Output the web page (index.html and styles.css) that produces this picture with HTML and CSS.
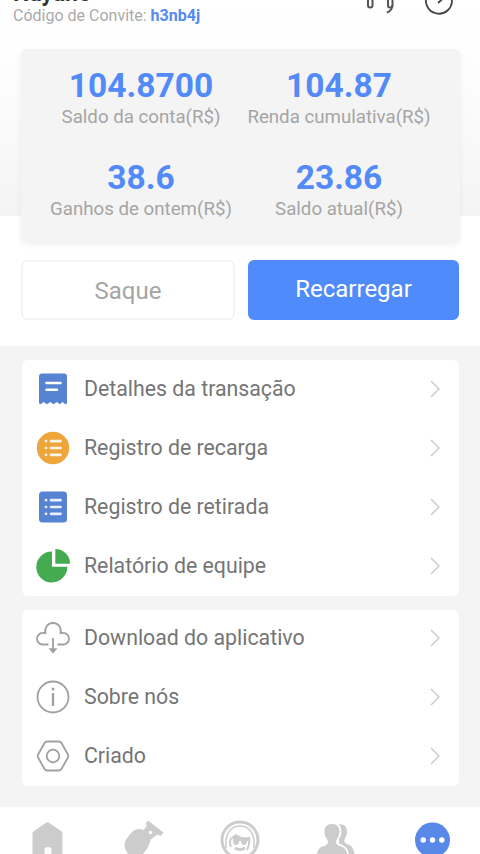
FILE: index.html
```html
<!DOCTYPE html>
<html lang="pt-BR">
<head>
<meta charset="utf-8">
<meta name="viewport" content="width=device-width">
<title>Minha conta</title>
<link rel="stylesheet" href="styles.css">
</head>
<body>
<div class="app">
  <section class="top">
    <header class="header">
      <div class="user">
        <div class="name">Nayane</div>
        <div class="invite">Código de Convite: <b>h3nb4j</b></div>
      </div>
      <div class="actions">
        <svg class="headset" viewBox="0 0 32 36" fill="none" stroke="#555" stroke-width="2"><path d="M4 20V14a12 12 0 0 1 24 0v6"/><rect x="4" y="18" width="4.500" height="10.500" rx="2"/><rect x="24" y="18" width="4.500" height="10.500" rx="2"/><path d="M28.300 26q0 6-5.500 7.500"/></svg>
        <svg class="clock" viewBox="0 0 32 36" fill="none" stroke="#444" stroke-width="1.800"><path d="M28.800 20A13 13 0 1 1 26 13.500"/><path d="M15 24l5-4.500"/></svg>
      </div>
    </header>
    <div class="stats">
      <div class="stat"><strong>104.8700</strong><span>Saldo da conta(R$)</span></div>
      <div class="stat"><strong>104.87</strong><span>Renda cumulativa(R$)</span></div>
      <div class="stat"><strong>38.6</strong><span>Ganhos de ontem(R$)</span></div>
      <div class="stat"><strong>23.86</strong><span>Saldo atual(R$)</span></div>
    </div>
  </section>
  <div class="buttons">
    <button class="btn">Saque</button>
    <button class="btn primary">Recarregar</button>
  </div>
  <main class="menus">
    <nav class="menu">
      <a class="row"><svg class="icon" viewBox="0 0 34 34"><path fill="#5683d2" d="M6 1.500h22a3 3 0 0 1 3 3V31q-.5 1.500-2 1l-2.500-2-2.500 2.200-3.200-2.200-3.300 2.200-3.300-2.200-3.200 2.200L7.500 30 5 32q-1.500.5-2-1V4.500a3 3 0 0 1 3-3z"/><path d="M10.500 11h14M10.500 17.800h10.500" stroke="#fff" stroke-width="2.500" stroke-linecap="round"/></svg><span>Detalhes da transação</span><svg class="chev" viewBox="0 0 10 18"><path d="M1 1l8 8-8 8"/></svg></a>
      <a class="row"><svg class="icon" viewBox="0 0 34 34"><circle cx="17" cy="17" r="16.200" fill="#eda53c"/><g stroke="#fff" stroke-width="2.700" stroke-linecap="round" opacity=".88"><path d="M15 10.200h9.500M15 17h9.500M15 23.800h9.500"/><path d="M10 10.200h.1M10 17h.1M10 23.800h.1"/></g></svg><span>Registro de recarga</span><svg class="chev" viewBox="0 0 10 18"><path d="M1 1l8 8-8 8"/></svg></a>
      <a class="row"><svg class="icon" viewBox="0 0 34 34"><rect x="3" y="1.500" width="28" height="31" rx="3.500" fill="#5683d2"/><g stroke="#fff" stroke-width="2.700" stroke-linecap="round" opacity=".88"><path d="M15 10.200h9.500M15 17h9.500M15 23.800h9.500"/><path d="M10 10.200h.1M10 17h.1M10 23.800h.1"/></g></svg><span>Registro de retirada</span><svg class="chev" viewBox="0 0 10 18"><path d="M1 1l8 8-8 8"/></svg></a>
      <a class="row"><svg class="icon" viewBox="0 0 34 34" fill="#45ab50"><path d="M16 2.500A15.500 15.500 0 1 0 31.300 17.800H16z"/><path d="M19.300 0A14.700 14.700 0 0 1 34 14.800H19.300z"/></svg><span>Relatório de equipe</span><svg class="chev" viewBox="0 0 10 18"><path d="M1 1l8 8-8 8"/></svg></a>
    </nav>
    <nav class="menu second">
      <a class="row"><svg class="icon line" viewBox="0 0 34 34"><path d="M12.500 23.500H7a5.800 5.800 0 0 1-.5-11.600q1.500-.2 2.800.3C8.500 6 12 2 17 2s8.500 4 7.700 10.200q1.300-.5 2.800-.3a5.800 5.800 0 0 1-.5 11.600H21.500M17 17v11"/><path d="M12.500 27.200h9L17 32.500z" fill="#a0a0a0" stroke="none"/></svg><span>Download do aplicativo</span><svg class="chev" viewBox="0 0 10 18"><path d="M1 1l8 8-8 8"/></svg></a>
      <a class="row"><svg class="icon line" viewBox="0 0 34 34"><circle cx="17" cy="17" r="15.500"/><path d="M17 13v13" stroke-width="2.300"/><circle cx="17" cy="9" r="1.500" fill="#a0a0a0" stroke="none"/></svg><span>Sobre nós</span><svg class="chev" viewBox="0 0 10 18"><path d="M1 1l8 8-8 8"/></svg></a>
      <a class="row"><svg class="icon line" viewBox="0 0 34 34"><path d="M11 2.500h12q1.500 0 2.300 1.200l6.500 11.500q1 1.800 0 3.600l-6.500 11.500Q24.500 31.500 23 31.500H11q-1.500 0-2.300-1.200L2.200 18.800q-1-1.800 0-3.600L8.700 3.700Q9.500 2.500 11 2.500z"/><circle cx="17" cy="17" r="6.300"/></svg><span>Criado</span><svg class="chev" viewBox="0 0 10 18"><path d="M1 1l8 8-8 8"/></svg></a>
    </nav>
  </main>
  <footer class="tabs">
    <svg viewBox="0 0 40 40" fill="#ccc"><path d="M4.500 13Q4.500 12 6 11L18 2.800q1.500-1 3 0L33 11q1.500 1 1.500 2v27H23.500V30q0-3-3.500-3t-3.500 3v10h-12z"/></svg>
    <svg viewBox="0 0 40 40" fill="#ccc"><path d="M8 12q5-5 11-2l3 2q6 4 4 10-2 7-8 13-6 6-12 2Q-3 25 3 18z"/><path d="M18 11l5-5-1.500-2 2.500-3.500L39.500 12.500 37 16l-4-1.500-6 5z"/><circle cx="26.500" cy="12.500" r="1.700" fill="#fff"/></svg>
    <svg viewBox="0 0 40 40" fill="none" stroke="#ccc"><circle cx="20" cy="20" r="18" stroke-width="3"/><path d="M6 28V19Q9 6 20 6t14 13v9" stroke-width="1.500"/><path d="M11 27q-3-7 2-10l3-2q3 4 13 3 1 6-2 12" stroke-width="2"/><path d="M13 17l5-2 4 3h6v3H13z" fill="#ccc" stroke="none"/><circle cx="16" cy="22" r="2.500" fill="#ccc"/><circle cx="24" cy="22" r="2.500" fill="#ccc"/><path d="M15 28q5 3 10 0" stroke-width="3"/></svg>
    <svg viewBox="0 0 40 40"><path fill="#ccc" d="M22 4.500c10-1.500 11 8 6.500 15-1 3 1 4 5 5.500q5 2 5.500 15H24z"/><path fill="#ccc" stroke="#fff" stroke-width="1.800" d="M16 3c9.500 0 10.500 10.500 5.500 17-1.500 3 0 4.500 5 6q6 2 6 14H-.5q0-12 6-14c5-1.500 6.500-3 5-6C5.500 13.500 6.500 3 16 3z"/></svg>
    <svg viewBox="0 0 40 40"><circle cx="20.500" cy="20" r="17.500" fill="#5888e8"/><g fill="#fff"><circle cx="11.200" cy="20" r="2.700"/><circle cx="20.500" cy="20" r="2.700"/><circle cx="29.800" cy="20" r="2.700"/></g></svg>
  </footer>
</div>
</body>
</html>
```
FILE: styles.css
```css
* { box-sizing: border-box; }
body {
  margin: 0;
  background: #fff;
  font-family: Roboto, "Liberation Sans", sans-serif;
}
.app {
  height: 854px;
  overflow: hidden;
  display: flex;
  flex-direction: column;
}
.top {
  flex: none;
  height: 216px;
  background: linear-gradient(#fff 0%, #fdfdfd 35%, #f4f4f4 100%);
  padding: 0 20px 0 21px;
}
.header {
  height: 49px;
  display: flex;
  justify-content: space-between;
}
.user { margin: -19px 0 0 -8px; }
.name {
  font-size: 23px;
  line-height: 26px;
  font-weight: 700;
  color: #333;
}
.invite {
  font-size: 16px;
  line-height: 18px;
  color: #aaa;
}
.invite b { color: #5589f6; }
.actions {
  display: flex;
  gap: 27px;
  margin: -21px 5px 0 0;
}
.actions svg { width: 32px; height: 36px; }
.stats {
  height: 193px;
  padding: 0 22px 0 21px;
  display: grid;
  grid-template-columns: 198px 198px;
  grid-template-rows: 92px 92px;
  background: #f4f4f4;
  border-radius: 6px;
  box-shadow: 0 3px 6px rgba(0, 0, 0, .06);
}
.stat {
  display: flex;
  flex-direction: column;
  align-items: center;
  padding-top: 17px;
  white-space: nowrap;
}
.stat strong {
  font-size: 33.5px;
  line-height: 40px;
  color: #528bf7;
}
.stat span {
  font-size: 18.7px;
  line-height: 22px;
  color: #a5a5a5;
}
.buttons {
  flex: none;
  height: 130px;
  padding: 44px 21px 26px;
  display: grid;
  grid-template-columns: 214px 211px;
  gap: 13px;
}
.btn {
  height: 60px;
  border: 2px solid #f4f4f4;
  border-radius: 6px;
  background: #fff;
  color: #a5a5a5;
  font: 24px Roboto, "Liberation Sans", sans-serif;
  padding: 1px 0 0;
}
.btn.primary {
  border-color: #508bfc;
  background: #508bfc;
  color: #fff;
  padding: 0 0 2px;
}
.menus {
  flex: none;
  height: 461px;
  padding: 14px 21px 0 22px;
  background: #f4f4f4;
}
.menu {
  height: 236px;
  background: #fff;
  border-radius: 6px;
}
.menu.second {
  height: 176px;
  margin-top: 14px;
}
.row {
  height: 59px;
  display: flex;
  align-items: center;
  padding: 0 19px 2px 14px;
  color: #757575;
  font-size: 21.3px;
}
.second .row { padding-bottom: 4px; }
.icon {
  width: 34px;
  height: 34px;
  margin-right: 14px;
  overflow: visible;
}
.icon.line { fill: none; stroke: #a0a0a0; stroke-width: 1.8; }
.row span { flex: 1; }
.chev {
  width: 10px;
  height: 18px;
  fill: none;
  stroke: #ccc;
  stroke-width: 1.5;
}
.tabs {
  flex: none;
  height: 62px;
  padding: 13px 28px 0;
  display: flex;
  justify-content: space-between;
  background: #fff;
}
.tabs svg { width: 40px; height: 40px; overflow: visible; }
```
